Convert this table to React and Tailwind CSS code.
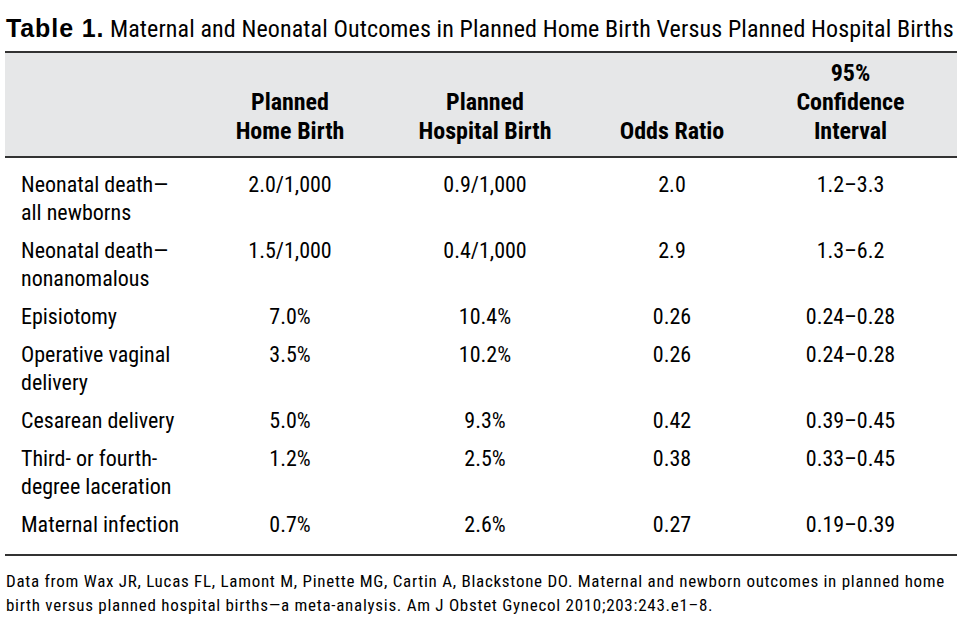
const rows = [
  { label: ["Neonatal death—", "all newborns"], home: "2.0/1,000", hosp: "0.9/1,000", odds: "2.0", ci: "1.2–3.3" },
  { label: ["Neonatal death—", "nonanomalous"], home: "1.5/1,000", hosp: "0.4/1,000", odds: "2.9", ci: "1.3–6.2" },
  { label: ["Episiotomy"], home: "7.0%", hosp: "10.4%", odds: "0.26", ci: "0.24–0.28" },
  { label: ["Operative vaginal", "delivery"], home: "3.5%", hosp: "10.2%", odds: "0.26", ci: "0.24–0.28" },
  { label: ["Cesarean delivery"], home: "5.0%", hosp: "9.3%", odds: "0.42", ci: "0.39–0.45" },
  { label: ["Third- or fourth-", "degree laceration"], home: "1.2%", hosp: "2.5%", odds: "0.38", ci: "0.33–0.45" },
  { label: ["Maternal infection"], home: "0.7%", hosp: "2.6%", odds: "0.27", ci: "0.19–0.39" },
];

const grid = "grid grid-cols-[205px_160px_230px_144px_213px]";
const font = { fontFamily: '"Liberation Sans Narrow", "Roboto Condensed", Roboto, sans-serif' };

export default function App() {
  return (
    <div className="w-[974px] h-[618px] bg-white text-black overflow-hidden" style={font}>
      <div className="pl-[6px] pt-[14px] h-[42px] text-[24px] leading-[28px] whitespace-nowrap">
        <span className="font-black text-[25px] leading-[28px] tracking-[0.9px]" style={{ fontFamily: '"Liberation Sans", Arial, sans-serif' }}>Table 1.</span>{" "}
        <span className="tracking-[0.12px]">Maternal and Neonatal Outcomes in Planned Home Birth Versus Planned Hospital Births</span>
      </div>

      <div className="ml-[5px] mt-[9px] w-[952px]">
        <div className={`${grid} bg-[#e6e7e8] border-t-2 border-b-2 border-[#333] pt-[6px] pb-[10px] items-end font-bold text-[24px] leading-[29px] text-center`}>
          <div />
          <div>Planned<br />Home Birth</div>
          <div>Planned<br />Hospital Birth</div>
          <div>Odds Ratio</div>
          <div>95%<br />Confidence<br />Interval</div>
        </div>

        <div className="pt-[8px] pb-[10px] border-b-2 border-[#333] text-[22px] leading-[28px]">
          {rows.map((r, i) => (
            <div key={i} className={`${grid} py-[5px]`}>
              <div className="pl-[16px] whitespace-nowrap">
                {r.label.map((l, j) => (
                  <div key={j}>{l}</div>
                ))}
              </div>
              <div className="text-center">{r.home}</div>
              <div className="text-center">{r.hosp}</div>
              <div className="text-center">{r.odds}</div>
              <div className="text-center">{r.ci}</div>
            </div>
          ))}
        </div>
      </div>

      <div className="pl-[6px] pt-[13px] text-[17px] leading-[24px] tracking-[0.72px] whitespace-nowrap">
        <div>Data from Wax JR, Lucas FL, Lamont M, Pinette MG, Cartin A, Blackstone DO. Maternal and newborn outcomes in planned home</div>
        <div>birth versus planned hospital births—a meta-analysis. Am J Obstet Gynecol 2010;203:243.e1–8.</div>
      </div>
    </div>
  );
}
